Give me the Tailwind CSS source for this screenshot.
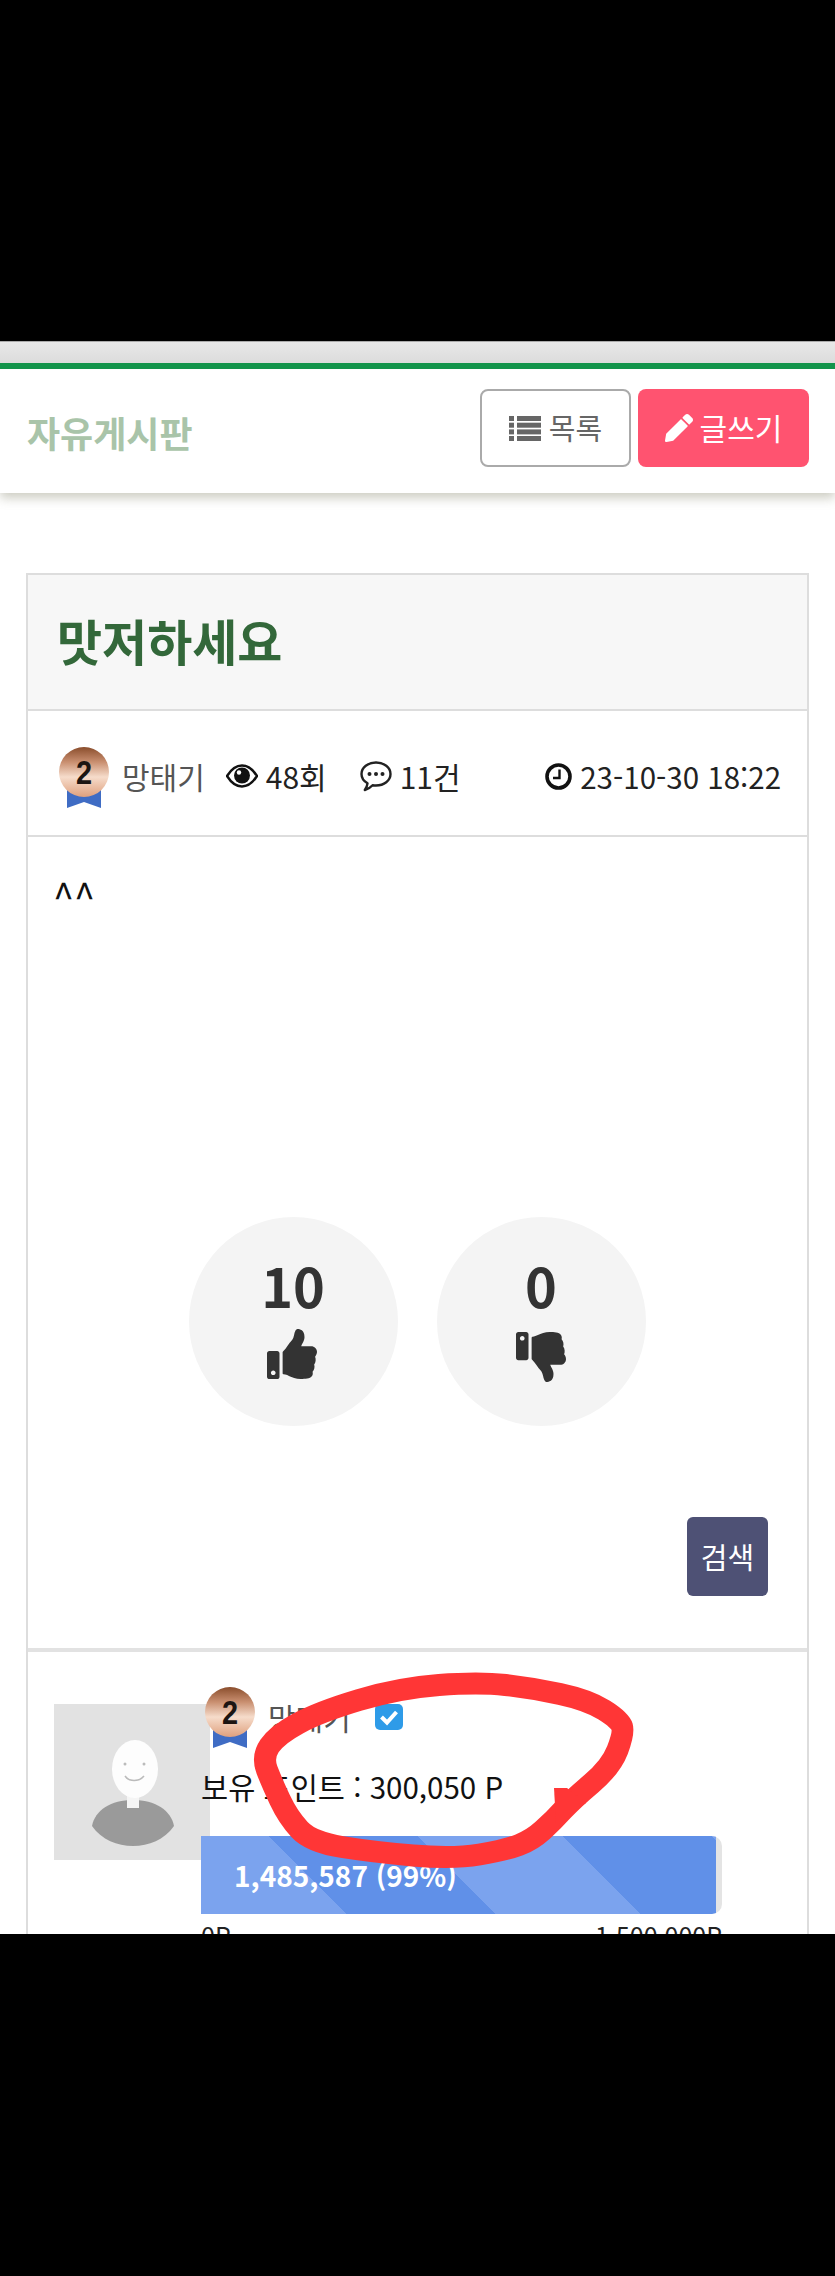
<!DOCTYPE html>
<html lang="ko">
<head>
  <meta charset="UTF-8">
  <meta name="viewport" content="width=device-width, initial-scale=1.0">
  <title>자유게시판</title>
  <script src="https://cdn.jsdelivr.net/npm/@tailwindcss/browser@4"></script>
</head>
<body class="bg-black font-['Noto_Sans_CJK_KR','Noto_Sans',sans-serif]">
<div class="relative w-[835px] h-[2276px] overflow-hidden flex flex-col">

  <!-- black area above the page -->
  <div class="h-[341px] shrink-0 bg-black"></div>
  <div class="h-[22px] shrink-0 border-t border-[#aaa] bg-gradient-to-b from-[#e8e8e8] to-[#dcdcdc]"></div>

  <!-- page -->
  <div class="h-[1571px] shrink-0 overflow-hidden bg-white">
    <!-- header -->
    <header class="relative z-10 h-[130px] flex items-center justify-between pl-[27px] pr-[26px] pb-[6px] bg-white border-t-[6px] border-[#13944b] shadow-[0_5px_10px_rgba(130,130,105,0.4)]">
      <h1 class="text-[36px] font-bold text-[#a9c4a9] leading-none mt-[8px]">자유게시판</h1>
      <div class="flex gap-[7px]">
        <a class="w-[151px] h-[78px] flex items-center justify-center gap-[8px] bg-white border-2 border-[#aaa] rounded-[8px] text-[29px] text-[#666]">
          <svg class="w-[32px] h-[25px]" viewBox="0 0 32 25" fill="#666"><rect y="0" width="5" height="5"/><rect x="8" y="0" width="24" height="5"/><rect y="6.7" width="5" height="5"/><rect x="8" y="6.7" width="24" height="5"/><rect y="13.4" width="5" height="5"/><rect x="8" y="13.4" width="24" height="5"/><rect y="20" width="5" height="5"/><rect x="8" y="20" width="24" height="5"/></svg>
          <span class="leading-none mt-[-2px]">목록</span>
        </a>
        <a class="w-[171px] h-[78px] flex items-center justify-center gap-[7px] bg-[#ff5370] rounded-[8px] text-[30px] text-white">
          <svg class="w-[28px] h-[28px]" viewBox="0 0 512 512" fill="#fff"><path d="M497.9 142.1l-46.1 46.1c-4.7 4.7-12.3 4.7-17 0l-111-111c-4.7-4.7-4.7-12.3 0-17l46.1-46.1c18.7-18.7 49.1-18.7 67.9 0l60.1 60.1c18.8 18.7 18.8 49.1 0 68zM284.2 99.8L21.6 362.4.4 483.9c-2.9 16.4 11.4 30.6 27.8 27.8l121.5-21.3 262.6-262.6c4.7-4.7 4.7-12.3 0-17l-111-111c-4.8-4.7-12.4-4.7-17.1 0z"/></svg>
          <span class="leading-none mt-[-2px]">글쓰기</span>
        </a>
      </div>
    </header>

    <!-- post card -->
    <article class="mt-[80px] ml-[26px] w-[783px] border-2 border-[#ddd]">
      <div class="h-[136px] flex items-center pl-[29px] bg-[#f7f7f7] border-b-2 border-[#ddd]">
        <h2 class="text-[49px] font-bold text-[#33683a] leading-none mt-[-6px]">맛저하세요</h2>
      </div>

      <div class="h-[126px] flex items-center justify-between pl-[31px] pr-[26px] pt-[6px] border-b-2 border-[#ddd] text-[30px] text-[#222]">
        <div class="flex items-center">
          <div class="relative w-[50px] h-[61px] mt-[2px] shrink-0">
            <svg class="w-[50px] h-[61px]" viewBox="0 0 50 61">
              <defs>
                <linearGradient id="bronze" x1="0" y1="0" x2="0" y2="1"><stop offset="0" stop-color="#8a4d2c"/><stop offset="0.3" stop-color="#c98f70"/><stop offset="0.6" stop-color="#f6dccb"/><stop offset="1" stop-color="#dfa07d"/></linearGradient>
              </defs>
              <path d="M8 36h34v25l-17-6-17 6z" fill="#3f6cc4"/>
              <circle cx="25" cy="25" r="25" fill="url(#bronze)"/>
            </svg>
            <span class="absolute inset-x-0 top-0 h-[50px] text-center font-['Liberation_Sans'] font-bold text-[34px] leading-[50px] text-[#1c1512] scale-x-[0.85]">2</span>
          </div>
          <span class="ml-[13px] text-[#555]">망태기</span>
          <svg class="ml-[21px] w-[32px] h-[24px]" viewBox="0 0 32 24"><path d="M1 12C6 4 11 1.500 16 1.500S26 4 31 12c-5 8-10 10.500-15 10.500S6 20 1 12z" fill="none" stroke="#111" stroke-width="2.400"/><circle cx="16" cy="11.500" r="8" fill="#111"/><circle cx="13" cy="8.500" r="2.200" fill="#fff"/></svg>
          <span class="ml-[8px]">48회</span>
          <svg class="ml-[33px] w-[32px] h-[32px]" viewBox="0 0 32 32"><path d="M16 2.500c8 0 14.500 5 14.500 11.500S24 25.500 16 25.500c-1.200 0-2.300-.1-3.400-.3C10.500 27.500 8 29 4.800 30c1.500-2 2.400-4 2.700-6.700C3.800 21.200 1.500 17.800 1.500 14 1.500 7.500 8 2.500 16 2.500z" fill="none" stroke="#222" stroke-width="2.400" stroke-linejoin="round"/><circle cx="9.500" cy="14" r="2" fill="#222"/><circle cx="16" cy="14" r="2" fill="#222"/><circle cx="22.500" cy="14" r="2" fill="#222"/></svg>
          <span class="ml-[8px]">11건</span>
        </div>
        <div class="flex items-center">
          <svg class="w-[27px] h-[27px]" viewBox="0 0 27 27"><circle cx="13.500" cy="13.500" r="11.500" fill="none" stroke="#111" stroke-width="3.600"/><path d="M14.500 6.500v8.500H8" fill="none" stroke="#111" stroke-width="2.400"/></svg>
          <span class="ml-[8px] text-[29.5px]">23-10-30 18:22</span>
        </div>
      </div>

      <!-- body -->
      <div class="h-[811px] flex flex-col pl-[25px] pr-[39px] pt-[39px]">
        <p class="text-[38px] leading-[38px] text-[#111]">^^</p>
        <div class="mt-[303px] flex justify-center gap-[39px] pl-[13px]">
          <div class="w-[209px] h-[209px] rounded-full bg-[#f4f4f4] flex flex-col items-center text-[#333]">
            <span class="mt-[32px] text-[54px] leading-[72px] font-semibold">10</span>
            <svg class="mt-[8px] ml-[-3px] w-[52px] h-[50px]" viewBox="0 0 512 512" fill="#333"><path d="M104 224H24c-13.255 0-24 10.745-24 24v240c0 13.255 10.745 24 24 24h80c13.255 0 24-10.745 24-24V248c0-13.255-10.745-24-24-24zM64 472c-13.255 0-24-10.745-24-24s10.745-24 24-24 24 10.745 24 24-10.745 24-24 24zM384 81.452c0 42.416-25.97 66.208-33.277 94.548h101.723c33.397 0 59.397 27.746 59.553 58.098.084 17.938-7.546 37.249-19.439 49.197l-.11.11c9.836 23.337 8.237 56.037-9.308 79.469 8.681 25.895-.069 57.704-16.382 74.757 4.298 17.598 2.244 32.575-6.148 44.632C440.202 511.587 389.616 512 346.839 512l-2.845-.001c-48.287-.017-87.806-17.598-119.56-31.725-15.957-7.099-36.821-15.887-52.651-16.178-6.54-.12-11.783-5.457-11.783-11.998v-213.77c0-3.2 1.282-6.271 3.558-8.521 39.614-39.144 56.648-80.587 89.117-113.111 14.804-14.832 20.188-37.236 25.393-58.902C282.515 39.293 291.817 0 312 0c24 0 72 8 72 81.452z"/></svg>
          </div>
          <div class="w-[209px] h-[209px] rounded-full bg-[#f4f4f4] flex flex-col items-center text-[#333]">
            <span class="mt-[32px] text-[54px] leading-[72px] font-semibold">0</span>
            <svg class="mt-[11px] w-[52px] h-[50px] -scale-y-100" viewBox="0 0 512 512" fill="#333"><path d="M104 224H24c-13.255 0-24 10.745-24 24v240c0 13.255 10.745 24 24 24h80c13.255 0 24-10.745 24-24V248c0-13.255-10.745-24-24-24zM64 472c-13.255 0-24-10.745-24-24s10.745-24 24-24 24 10.745 24 24-10.745 24-24 24zM384 81.452c0 42.416-25.97 66.208-33.277 94.548h101.723c33.397 0 59.397 27.746 59.553 58.098.084 17.938-7.546 37.249-19.439 49.197l-.11.11c9.836 23.337 8.237 56.037-9.308 79.469 8.681 25.895-.069 57.704-16.382 74.757 4.298 17.598 2.244 32.575-6.148 44.632C440.202 511.587 389.616 512 346.839 512l-2.845-.001c-48.287-.017-87.806-17.598-119.56-31.725-15.957-7.099-36.821-15.887-52.651-16.178-6.54-.12-11.783-5.457-11.783-11.998v-213.77c0-3.2 1.282-6.271 3.558-8.521 39.614-39.144 56.648-80.587 89.117-113.111 14.804-14.832 20.188-37.236 25.393-58.902C282.515 39.293 291.817 0 312 0c24 0 72 8 72 81.452z"/></svg>
          </div>
        </div>
        <div class="mt-[91px] flex justify-end">
          <button class="w-[81px] h-[79px] rounded-[6px] bg-[#4e5175] text-white text-[29px]">검색</button>
        </div>
      </div>

      <!-- writer -->
      <div class="border-t-4 border-[#e2e2e2] flex items-start pl-[26px]">
        <svg class="mt-[52px] w-[156px] h-[156px] shrink-0" viewBox="0 0 156 156">
          <rect width="156" height="156" fill="#e2e2e2"/>
          <path d="M38 122c3-16 19-26 41-26s38 10 41 26c-10 14-25 20-41 20s-31-6-41-20z" fill="#9a9a9a"/>
          <rect x="73" y="84" width="12" height="20" fill="#f5f5f5"/>
          <ellipse cx="81" cy="65" rx="23" ry="29" fill="#fdfdfd"/>
          <circle cx="71" cy="60" r="1.500" fill="#bbb"/><circle cx="90" cy="60" r="1.500" fill="#bbb"/>
          <path d="M71 72c4 6 14 6 19 0" fill="none" stroke="#bbb" stroke-width="1.500"/>
        </svg>
        <div class="relative ml-[-9px] w-[521px] pt-[35px]">
          <div class="flex items-center h-[61px] pl-[4px]">
            <div class="relative w-[50px] h-[61px] shrink-0">
              <svg class="w-[50px] h-[61px]" viewBox="0 0 50 61">
                <path d="M8 36h34v25l-17-6-17 6z" fill="#3f6cc4"/>
                <circle cx="25" cy="25" r="25" fill="url(#bronze)"/>
              </svg>
              <span class="absolute inset-x-0 top-0 h-[50px] text-center font-['Liberation_Sans'] font-bold text-[34px] leading-[50px] text-[#1c1512] scale-x-[0.85]">2</span>
            </div>
            <span class="ml-[13px] text-[30px] text-[#555]">망태기</span>
            <svg class="ml-[24px] mt-[-2px] w-[28px] h-[26px]" viewBox="0 0 28 26"><rect width="28" height="26" rx="5" fill="#2e9be8"/><path d="M6.500 13l5.500 5.500L21.500 8" fill="none" stroke="#fff" stroke-width="4"/></svg>
          </div>
          <p class="mt-[17px] text-[29.5px] leading-[42px] text-[#111]">보유 포인트 : 300,050 P</p>
          <div class="mt-[29px] h-[78px] rounded-r-[10px] bg-[#e4e4e4] overflow-hidden">
            <div class="w-[515px] h-full flex items-center pl-[33px] text-[28px] font-semibold text-white bg-[repeating-linear-gradient(45deg,#7ba3ee_0,#7ba3ee_103px,#6090e8_103px,#6090e8_208px)]">1,485,587 (99%)</div>
          </div>
          <div class="mt-[4px] flex justify-between text-[25px] leading-[34px] text-[#222]">
            <span>0P</span>
            <span>1,500,000P</span>
          </div>
        </div>
      </div>
    </article>
  </div>

  <!-- black area below the page -->
  <div class="flex-1 bg-black"></div>

  <!-- red marker scribble lying over the screenshot -->
  <svg class="absolute left-0 top-0 w-[835px] h-[2276px] pointer-events-none" viewBox="0 0 835 2276" fill="none">
    <path d="M439 1685Q399 1688 359 1700Q319 1712 298 1723.5Q277 1735 269.5 1746Q262 1757 267 1770Q272 1783 280 1800Q288 1817 299.5 1829.5Q311 1842 342 1847Q373 1852 413 1855.5Q453 1859 479.5 1854.5Q506 1850 519 1845Q532 1840 543 1830Q554 1820 563 1810Q572 1800 591.5 1783.5Q611 1767 617.5 1750Q624 1733 622 1726.5Q620 1720 604 1710Q588 1700 560 1694Q532 1688 505.5 1685Q479 1682 439 1685Z" stroke="#ff3636" stroke-width="22" stroke-linejoin="round"/>
    <path d="M554 1788L567 1788L586 1803L556 1823Z" fill="#ff3636"/>
  </svg>
</div>
</body>
</html>
